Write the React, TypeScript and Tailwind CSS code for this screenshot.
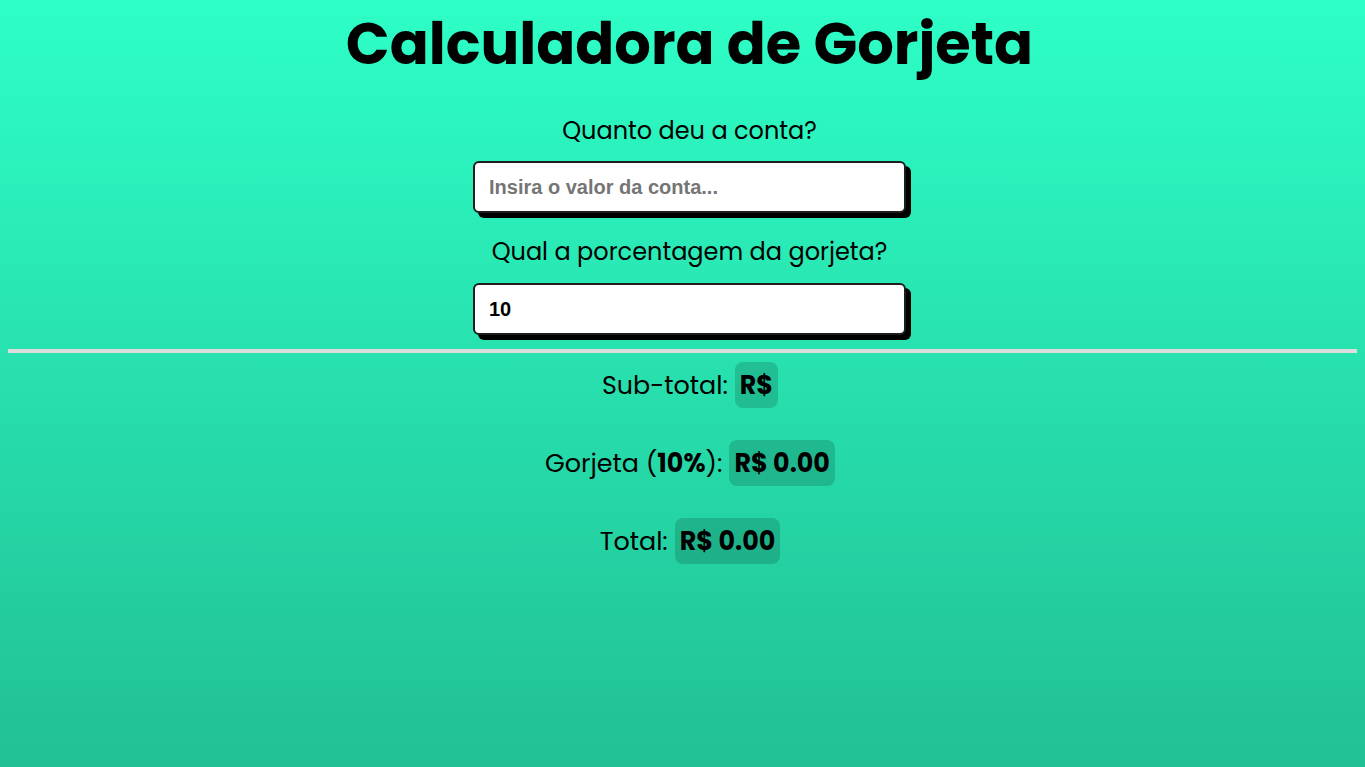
import { useState } from "react";

const FONT = "font-['Poppins','Inter',sans-serif]";

function Badge({ children }: { children: React.ReactNode }) {
  return (
    <span className="rounded-lg bg-black/15 px-[5px] py-[5px] font-bold leading-[36px]">{children}</span>
  );
}

export default function App() {
  const [bill, setBill] = useState("");
  const [pct, setPct] = useState("10");

  const value = parseFloat(bill);
  const p = parseFloat(pct) || 0;
  const tip = isNaN(value) ? 0 : (value * p) / 100;
  const total = isNaN(value) ? 0 : value + tip;

  return (
    <div
      className={`min-h-[767px] bg-gradient-to-b from-[#2effc7] to-[#21c094] px-2 text-black ${FONT}`}
    >
      <div className="flex flex-col items-center pl-[14px]">
        <h1 className="text-[57.5px] font-bold leading-[88px]">Calculadora de Gorjeta</h1>

        <label className="mt-[25px] text-[24px] leading-[36px]">Quanto deu a conta?</label>
        <input
          type="text"
          value={bill}
          onChange={(e) => setBill(e.target.value)}
          placeholder="Insira o valor da conta..."
          className="mt-3 h-[52px] w-[433px] rounded-md border-2 border-[#1e1e1e] bg-white px-[14px] font-['Liberation_Sans',Arial,sans-serif] text-[20px] font-bold shadow-[5px_5px_0_#000] outline-none placeholder:text-[#757575]"
        />

        <label className="mt-[21px] text-[24px] leading-[36px]">Qual a porcentagem da gorjeta?</label>
        <input
          type="text"
          value={pct}
          onChange={(e) => setPct(e.target.value)}
          className="mt-[13px] h-[52px] w-[433px] rounded-md border-2 border-[#1e1e1e] bg-white px-[14px] font-['Liberation_Sans',Arial,sans-serif] text-[20px] font-bold shadow-[5px_5px_0_#000] outline-none"
        />
      </div>

      <hr className="mt-[14px] h-[4px] border-0 bg-[#dddddd]" />

      <div className="mt-[9px] flex flex-col items-center gap-[32px] pl-[15px] text-[25.4px] leading-[36px]">
        <div className="flex h-[46px] items-center gap-[7px]">
          <span>Sub-total:</span>
          <Badge>R$ {isNaN(value) ? "" : value.toFixed(2)}</Badge>
        </div>
        <div className="flex h-[46px] items-center gap-[7px]">
          <span>
            Gorjeta (<b>{p}%</b>):
          </span>
          <Badge>R$ {tip.toFixed(2)}</Badge>
        </div>
        <div className="flex h-[46px] items-center gap-[7px]">
          <span>Total:</span>
          <Badge>R$ {total.toFixed(2)}</Badge>
        </div>
      </div>
    </div>
  );
}
